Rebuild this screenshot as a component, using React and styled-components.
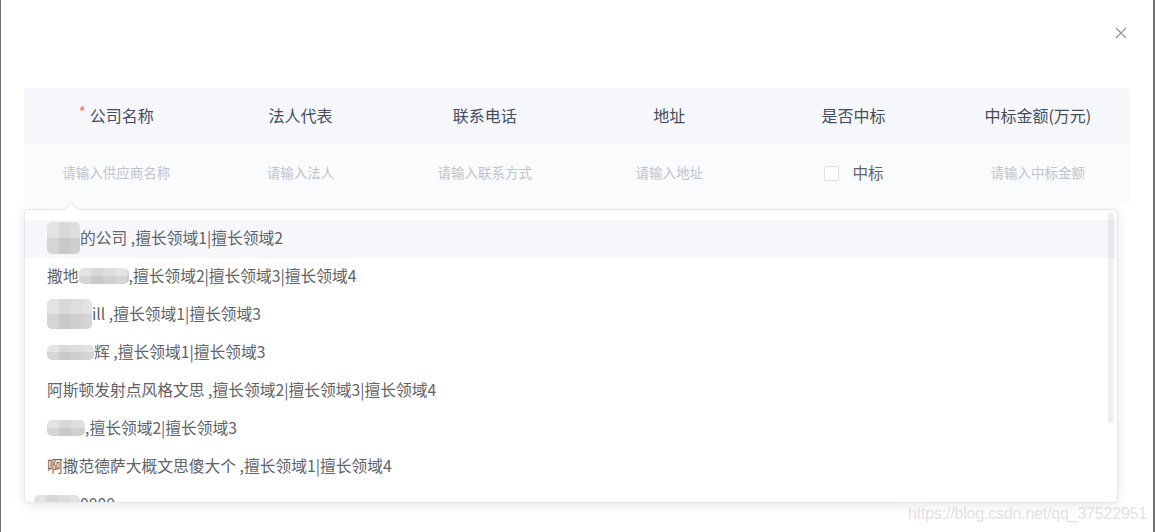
import React from 'react';
import styled, { createGlobalStyle } from 'styled-components';

const GlobalStyle = createGlobalStyle`
  html, body { margin: 0; padding: 0; background: #fff; }
  body { font-family: "Noto Sans CJK SC", "Noto Sans", sans-serif; }
`;

const columns = [
  { title: '公司名称', required: true, placeholder: '请输入供应商名称' },
  { title: '法人代表', placeholder: '请输入法人' },
  { title: '联系电话', placeholder: '请输入联系方式' },
  { title: '地址', placeholder: '请输入地址' },
  { title: '是否中标', checkbox: true },
  { title: '中标金额(万元)', placeholder: '请输入中标金额' },
];

const suggestions = [
  { blur: { w: 33, h: 32, dy: 1 }, text: '的公司 ,擅长领域1|擅长领域2', active: true },
  { pre: '撒地', blur: { w: 50, h: 16, dy: 1 }, text: ',擅长领域2|擅长领域3|擅长领域4' },
  { blur: { w: 45, h: 30, dy: 1 }, text: 'ill ,擅长领域1|擅长领域3' },
  { blur: { w: 47, h: 15, dy: 1 }, text: '辉 ,擅长领域1|擅长领域3' },
  { text: '阿斯顿发射点风格文思 ,擅长领域2|擅长领域3|擅长领域4' },
  { blur: { w: 38, h: 16, dy: 1 }, text: ',擅长领域2|擅长领域3' },
  { text: '啊撒范德萨大概文思傻大个 ,擅长领域1|擅长领域4' },
  { blur: { w: 46, h: 20, dy: 2, shift: -13 }, text: '0000' },
];

const Frame = styled.div`
  width: 1155px;
  height: 532px;
  display: flex;
  background: #6f6f6f;
  overflow: hidden;
`;

const Dialog = styled.div`
  position: relative;
  flex: 1;
  margin: 0 2px 0 1px;
  background: #fff;
  display: flex;
  flex-direction: column;
`;

const DialogHeader = styled.div`
  height: 88px;
  display: flex;
  justify-content: flex-end;
  align-items: flex-start;
  padding: 27px 26px 0 0;
  box-sizing: border-box;
`;

const CloseButton = styled.button`
  border: none;
  background: none;
  padding: 0;
  width: 12px;
  height: 12px;
  cursor: pointer;
  color: #909399;
  display: flex;
`;

const Table = styled.div`
  margin: 0 23px;
  display: grid;
  grid-template-columns: repeat(6, 1fr);
`;

const HeadCell = styled.div`
  height: 57px;
  padding-bottom: 4px;
  box-sizing: border-box;
  background: #f5f7fa;
  display: flex;
  align-items: center;
  justify-content: center;
  font-size: 16px;
  color: #454c5a;
`;

const Star = styled.span`
  color: #f56c6c;
  font-size: 15px;
  margin-right: 4px;
  position: relative;
  top: -3px;
`;

const BodyCell = styled.div`
  height: 58px;
  padding-bottom: 4px;
  box-sizing: border-box;
  background: #fafbfc;
  display: flex;
  align-items: center;
  justify-content: center;
  font-size: 13.5px;
  color: #c0c4cc;
`;

const CheckLabel = styled.label`
  display: flex;
  align-items: center;
  gap: 13px;
  font-size: 15.5px;
  color: #606266;
  margin-left: 1px;
`;

const CheckBox = styled.span`
  width: 13px;
  height: 13px;
  border: 1px solid #dcdfe6;
  border-radius: 2px;
  background: #fff;
  position: relative;
  top: 1px;
`;

const Popper = styled.div`
  position: absolute;
  left: 23px;
  top: 209px;
  width: 1094px;
  height: 294px;
  background: #fff;
  border: 1px solid #e4e7ed;
  border-radius: 4px;
  box-shadow: 0 2px 12px 0 rgba(0, 0, 0, 0.1);
  box-sizing: border-box;
  &::before {
    content: '';
    position: absolute;
    top: -6px;
    left: 41px;
    width: 10px;
    height: 10px;
    background: #fff;
    border-left: 1px solid #e4e7ed;
    border-top: 1px solid #e4e7ed;
    transform: rotate(45deg);
  }
`;

const List = styled.ul`
  list-style: none;
  margin: 0;
  padding: 10px 0 0;
  height: 100%;
  box-sizing: border-box;
  overflow: hidden;
  border-radius: 4px;
  position: relative;
`;

const Item = styled.li`
  height: 38px;
  padding: 0 20px 4px 22px;
  box-sizing: border-box;
  display: flex;
  align-items: center;
  font-size: 15.75px;
  color: #606266;
  white-space: nowrap;
  background: ${(p) => (p.$active ? '#f5f7fa' : 'transparent')};
`;

const Mosaic = styled.span`
  display: inline-block;
  flex: none;
  width: ${(p) => p.$w}px;
  height: ${(p) => p.$h}px;
  margin-left: ${(p) => p.$shift || 0}px;
  transform: translateY(${(p) => p.$dy || 0}px);
  background:
    linear-gradient(180deg, rgba(255,255,255,0.2) 0 50%, rgba(0,0,0,0.03) 50% 100%),
    repeating-linear-gradient(90deg, #dcdcdc 0 12px, #cfcfcf 12px 24px, #d6d6d6 24px 36px);
  border-radius: 5px;
  filter: blur(0.6px);
`;

const Scrollbar = styled.div`
  position: absolute;
  right: 3px;
  top: 2px;
  width: 6px;
  height: 211px;
  border-radius: 4px;
  background: rgba(144, 147, 153, 0.15);
`;

const Watermark = styled.div`
  position: absolute;
  right: 6px;
  bottom: 9px;
  font-family: "Liberation Sans", Arial, sans-serif;
  font-size: 16px;
  color: rgba(200, 200, 200, 0.55);
  letter-spacing: -0.2px;
`;

export default function App() {
  return (
    <>
      <GlobalStyle />
      <Frame>
        <Dialog>
          <DialogHeader>
            <CloseButton aria-label="close">
              <svg width="12" height="12" viewBox="0 0 12 12">
                <path d="M1 1L11 11M11 1L1 11" stroke="currentColor" strokeWidth="1.2" />
              </svg>
            </CloseButton>
          </DialogHeader>
          <Table>
            {columns.map((c) => (
              <HeadCell key={c.title}>
                {c.required && <Star>*</Star>}
                {c.title}
              </HeadCell>
            ))}
            {columns.map((c) => (
              <BodyCell key={c.title + '-in'}>
                {c.checkbox ? (
                  <CheckLabel>
                    <CheckBox />
                    中标
                  </CheckLabel>
                ) : (
                  c.placeholder
                )}
              </BodyCell>
            ))}
          </Table>
          <Popper>
            <List>
              {suggestions.map((s, i) => (
                <Item key={i} $active={s.active}>
                  {s.pre}
                  {s.blur && <Mosaic $w={s.blur.w} $h={s.blur.h} $dy={s.blur.dy} $shift={s.blur.shift} />}
                  {s.text}
                </Item>
              ))}
              <Scrollbar />
            </List>
          </Popper>
          <Watermark>https://blog.csdn.net/qq_37522951</Watermark>
        </Dialog>
      </Frame>
    </>
  );
}
